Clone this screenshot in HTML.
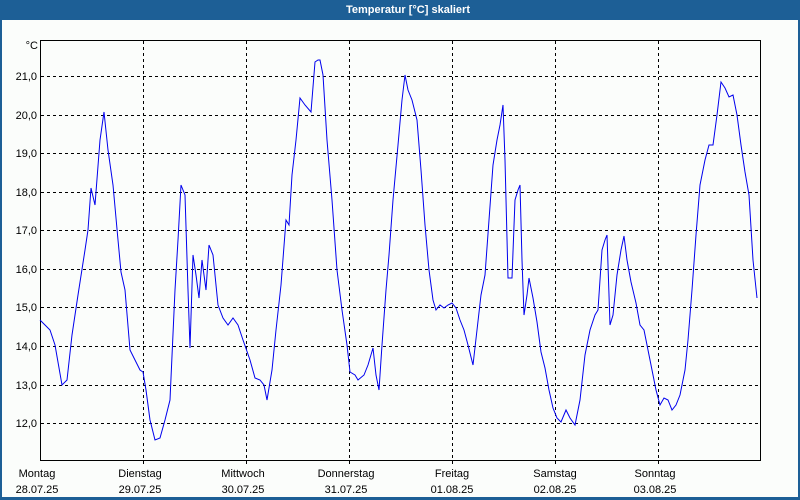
<!DOCTYPE html>
<html><head><meta charset="utf-8"><style>
html,body{margin:0;padding:0;width:800px;height:500px;overflow:hidden;background:#fbfdfb;font-family:"Liberation Sans",sans-serif}
</style></head><body>
<svg width="800" height="500" xmlns="http://www.w3.org/2000/svg" style="position:absolute;left:0;top:0">
<rect x="0" y="0" width="800" height="500" fill="#fbfdfb"/>
<rect x="0" y="0" width="800" height="20" fill="#1d5f96"/>
<rect x="0" y="20" width="2" height="480" fill="#1d5f96"/>
<rect x="798" y="20" width="2" height="480" fill="#1d5f96"/>
<rect x="0" y="497" width="800" height="3" fill="#1d5f96"/>
<text x="408" y="13" fill="#fff" font-size="11" font-weight="bold" text-anchor="middle">Temperatur [°C] skaliert</text>
<g stroke="#000" stroke-width="1" stroke-dasharray="3,3" fill="none">
<path d="M143.5 41V464M246.5 41V464M349.5 41V464M452.5 41V464M555.5 41V464M658.5 41V464"/>
<path d="M41 76.5H760M41 115.5H760M41 153.5H760M41 192.5H760M41 230.5H760M41 269.5H760M41 307.5H760M41 346.5H760M41 385.5H760M41 423.5H760"/>
</g>
<path d="M40.5 40.5H760.5V460.5H40.5Z" stroke="#000" fill="none"/>
<g font-size="11" fill="#000" text-anchor="end">
<text x="38" y="49">°C</text>
<text x="37" y="80">21,0</text><text x="37" y="119">20,0</text><text x="37" y="157">19,0</text>
<text x="37" y="196">18,0</text><text x="37" y="234">17,0</text><text x="37" y="273">16,0</text>
<text x="37" y="311">15,0</text><text x="37" y="350">14,0</text><text x="37" y="389">13,0</text>
<text x="37" y="427">12,0</text>
</g>
<g font-size="11" fill="#000" text-anchor="middle">
<text x="37" y="477">Montag</text><text x="37" y="493">28.07.25</text>
<text x="140" y="477">Dienstag</text><text x="140" y="493">29.07.25</text>
<text x="243" y="477">Mittwoch</text><text x="243" y="493">30.07.25</text>
<text x="346" y="477">Donnerstag</text><text x="346" y="493">31.07.25</text>
<text x="452" y="477">Freitag</text><text x="452" y="493">01.08.25</text>
<text x="555" y="477">Samstag</text><text x="555" y="493">02.08.25</text>
<text x="655" y="477">Sonntag</text><text x="655" y="493">03.08.25</text>
</g>
<polyline fill="none" stroke="#0000ee" stroke-width="1" points="40,320 45,325 50,330 55,345 62,385 67,380 72,335 78,295 85,250 88,230 91,188 95,205 100,140 104,112 108,150 113,185 118,240 121,272 125,290 130,350 135,360 140,370 143,372 146,390 150,420 155,440 160,438 165,420 170,400 175,290 178,240 181,185 185,195 188,290 190,348 193,255 196,275 199,298 202,260 206,290 209,245 213,255 218,305 223,318 228,325 233,318 238,325 243,340 250,360 255,378 260,380 264,385 267,400 272,370 276,330 281,285 286,220 289,225 292,175 296,140 300,98 305,105 311,112 315,62 318,60 320,60 323,75 327,140 332,200 337,270 342,310 347,345 350,372 355,375 358,380 364,375 368,365 373,348 376,375 379,390 382,345 386,290 389,255 393,200 398,145 402,100 405,75 408,90 412,100 417,120 421,170 425,225 429,270 433,300 436,310 440,305 444,308 448,305 452,303 456,308 460,320 464,330 468,345 473,365 477,330 481,295 485,275 489,220 493,165 497,140 500,125 503,105 505,160 508,278 512,278 515,200 518,190 520,185 522,260 524,315 527,295 529,278 533,298 537,322 541,352 545,368 549,390 553,408 557,418 561,422 566,410 570,418 575,425 580,400 585,355 590,330 595,315 598,310 602,250 605,240 607,235 610,325 613,315 617,275 621,250 624,236 627,260 631,282 636,303 640,325 644,330 648,350 652,370 656,390 660,405 664,398 668,400 672,410 676,405 680,395 685,370 688,340 692,290 696,235 700,185 705,160 709,145 713,145 717,115 721,82 725,88 729,97 733,95 737,115 741,145 745,172 749,195 753,260 757,298"/>
</svg>
</body></html>
